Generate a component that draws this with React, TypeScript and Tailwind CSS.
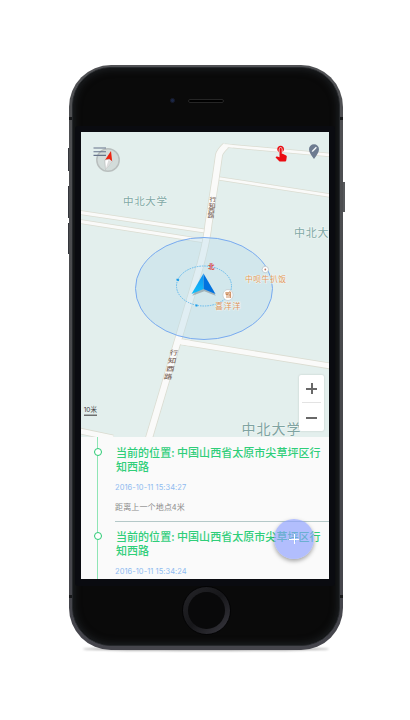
import React from "react";
import { MdTouchApp } from "react-icons/md";

const CJK = "font-['Noto_Sans_CJK_SC',sans-serif]";

function Road({ d, w }: { d: string; w: number }) {
  return (
    <g fill="none" strokeLinejoin="round">
      <path d={d} stroke="#dbdcd1" strokeWidth={w + 1.6} />
      <path d={d} stroke="#fafaf9" strokeWidth={w} />
    </g>
  );
}

type LabelProps = { x: number; y: number; w: number; size: number; fill: string; children: string; weight?: number };

function Label({ x, y, w, size, fill, children, weight = 400 }: LabelProps) {
  return (
    <text
      x={x}
      y={y}
      textLength={w}
      fontSize={size}
      fill={fill}
      fontWeight={weight}
      stroke="#f4faf8"
      strokeWidth="1.2"
      strokeOpacity="0.7"
      paintOrder="stroke"
    >
      {children}
    </text>
  );
}

function MapView() {
  return (
    <svg viewBox="81 132 248 305" className={`block h-[305px] w-[248px] ${CJK}`}>
      <defs>
        <linearGradient id="arrowLeft" x1="0" y1="0" x2="0" y2="1">
          <stop offset="0" stopColor="#0d8ff0" />
          <stop offset="1" stopColor="#12c0fa" />
        </linearGradient>
      </defs>
      <rect x="81" y="132" width="248" height="305" fill="#e3efed" />
      <Road d="M216 178 L330 195.500" w={2.6} />
      <Road d="M80 212.500 L208 231.500" w={3.2} />
      <Road d="M80 221.500 L208 241.500" w={3.2} />
      <Road d="M176 341 L330 366" w={5} />
      <Road d="M224.500 145.500 L330 155" w={2.6} />
      <Road d="M80 431 L113 438" w={5} />
      <Road d="M149 438 L200 266 Q207 240 208.500 224 L216 176 L219 155 Q220 151 226 145.500" w={6.2} />
      <path d="M176 341 L190 343.300" stroke="#fafaf9" strokeWidth="5" />
      <path d="M224.500 145.500 L233 146.300" stroke="#fafaf9" strokeWidth="2.600" />

      <ellipse cx="204" cy="288.500" rx="68.500" ry="51" fill="#b8dcea" fillOpacity="0.4" stroke="#78aaf0" strokeWidth="1" />
      <ellipse cx="204" cy="286" rx="27.500" ry="20" fill="none" stroke="#62b9ed" strokeWidth="1" strokeDasharray="1.500 1" />
      <path d="M176.500 279.300 l2.500 1 M195.500 305.500 h2" stroke="#179be9" strokeWidth="1.800" />

      <Label x={123} y={204.500} w={44} size={10.500} fill="#80a8a5">中北大学</Label>
      <Label x={294} y={237} w={34.500} size={11} fill="#80a8a5">中北大</Label>
      <Label x={241.500} y={433.500} w={59} size={14} fill="#7fa3a1">中北大学</Label>

      <text fontSize="4.7" fill="#806b61" fontWeight="500" textAnchor="middle" transform="translate(211.500 0) scale(1.450 1)">
        <tspan x="0.9" y="201.500">行</tspan>
        <tspan x="0.5" y="206.700">知</tspan>
        <tspan x="0" y="211.900">西</tspan>
        <tspan x="-0.5" y="217.100">路</tspan>
      </text>
      <text fontSize="6.500" fill="#806b61" fontWeight="500" textAnchor="middle" transform="translate(236.500 0) skewX(-10) scale(1.300 1)">
        <tspan x="-0.300" y="355">行</tspan>
        <tspan x="-0.500" y="363">知</tspan>
        <tspan x="-0.900" y="371">西</tspan>
        <tspan x="-1.500" y="379">路</tspan>
      </text>

      <circle cx="265.300" cy="269.500" r="3.200" fill="#fff" stroke="#b7c3c8" strokeWidth="0.800" />
      <circle cx="265.300" cy="269.500" r="0.900" fill="#ba7762" />
      <Label x={245} y={282} w={41} size={7.800} fill="#e49a5d">中呗牛扒饭</Label>
      <ellipse cx="228" cy="295" rx="5.100" ry="5.500" fill="#fff" stroke="#c4cdd0" strokeWidth="0.800" />
      <path d="M226 292 v2.500 h2 v-2.500 M227 292 v6 M229 298 v-6 h1.600 v3 h-1.600 M230.600 295 v3" fill="none" stroke="#c88351" strokeWidth="0.900" />
      <Label x={215} y={309} w={25.500} size={8} fill="#dd945d">喜洋洋</Label>
      <text x="208" y="269" fontSize="6.500" fontWeight="700" fill="#d9433d">北</text>

      <path d="M204 275 L215.500 294.500 L204 290 L192 294.500 Z" fill="#59666f" fillOpacity="0.400" transform="translate(0.300 1.300)" />
      <path d="M203.500 273.500 L215.500 294 L203.500 289 Z" fill="#0072df" />
      <path d="M203.500 273.500 L203.500 289 L191.500 294 Z" fill="url(#arrowLeft)" />

      <text x="83.700" y="412.300" fontSize="6.500" fill="#444" textLength="13.300" className="font-['Inter','Noto_Sans_CJK_SC',sans-serif]">10米</text>
      <path d="M84 415.200 H97" fill="none" stroke="#444" strokeWidth="1.100" />

      <circle cx="108" cy="160" r="11.200" fill="#d3dcda" stroke="#b9bfbe" strokeWidth="1.500" />
      <path d="M111 151 L112.200 161.500 L109.300 159.200 L105 160 Z" fill="#ed2411" />
      <path d="M104.800 160 L109.300 159.200 L112 161.500 L105.500 169.500 Z" fill="#fff" stroke="#a9a9a9" strokeWidth="0.500" />
      <path d="M108.500 160 L112 161.500 L105.500 169.500 Z" fill="#ddd" />
      <path d="M93.500 148 H106 M93.500 151.700 H106 M93.500 155.400 H106" stroke="#66738a" strokeWidth="1.100" />

      <path d="M314 159 C311.500 155.500 309 152.500 309 149.300 A5 5 0 0 1 319 149.300 C319 152.500 316.500 155.500 314 159 Z" fill="#6d7b90" />
      <path d="M311.700 152 l.5 -1.500 3.700 -3.700 1 1 -3.700 3.700 z" fill="#f5f8fa" />
    </svg>
  );
}

function Entry({ time, last }: { time: string; last?: boolean }) {
  return (
    <li className={`flex h-[85px] shrink-0 ${last ? "-mt-px" : ""}`}>
      <div className="w-[34px] shrink-0 pl-[12.5px]">
        <div className="flex h-full w-2 flex-col items-center">
          <span className="h-[11px] w-px bg-[#8fe5b5]" />
          <span className="h-2 w-2 shrink-0 rounded-full border-[1.5px] border-[#28ca72] bg-white" />
          <span className="w-px grow bg-[#8fe5b5]" />
        </div>
      </div>
      <div className={`flex grow flex-col ${last ? "" : "border-b border-[#b4c8c8]"}`}>
        <p className="mt-2 h-[28px] whitespace-nowrap pl-px text-[11px] font-medium leading-[14px] tracking-[0.04px] text-[#2fce79]">
          当前的位置: 中国山西省太原市尖草坪区行
          <br />
          知西路
        </p>
        <p className="mt-[9.5px] font-['Inter',sans-serif] text-[7.5px] leading-[10px] tracking-[0.06px] text-[#8fbaf0]">{time}</p>
        {!last && <p className="mt-[8.5px] whitespace-nowrap text-[8px] leading-[12px] tracking-[0.15px] text-[#8b8b8b]">距离上一个地点4米</p>}
      </div>
    </li>
  );
}

export default function App() {
  return (
    <main className={`h-[720px] w-[410px] overflow-hidden bg-white pl-[69px] pt-[65px] ${CJK}`}>
      <div className="relative h-[585px] w-[274px]">
        <span className="absolute -left-px top-[83px] h-[23px] w-1 bg-[#34363c]" />
        <span className="absolute -left-px top-[121px] h-[32px] w-1 bg-[#34363c]" />
        <span className="absolute -left-px top-[158px] h-[31px] w-1 bg-[#34363c]" />
        <span className="absolute -right-[2px] top-[117px] h-[30px] w-1 bg-[#56585b]" />
        <span className="absolute -bottom-[1px] left-[14px] h-1 w-[246px] rounded-[50%] bg-[#aaa] blur-[1px]" />
        <div className="absolute inset-0 rounded-[42px] bg-linear-to-b from-[#505154] via-[#48494c] to-[#45454c]" />
        <span className="absolute left-0 top-[52px] h-[3px] w-full bg-[#191a1c]" />
        <span className="absolute left-0 top-[530px] h-[3px] w-full bg-[#191a1c]" />
        <div className="absolute inset-x-[3px] bottom-[4px] top-[2px] rounded-[39px] border border-[#25282b] bg-[#0a0a0a] shadow-[inset_0_0_9px_#23272b]" />
        <div className="relative flex h-full flex-col">
          <header className="flex h-[61px] w-full items-center pl-[101px] pt-[10px]">
            <span className="h-[5px] w-[5px] rounded-full border border-[#171a2a] bg-[#1a2747]" />
            <span className="ml-[13px] h-1 w-[36px] rounded-full border border-[#252525] bg-black" />
          </header>
          <section className="ml-[6px] flex h-[460px] w-[260px] flex-col rounded-[3px] bg-[#0a0b10] px-[6px] pb-[7px] pt-[6px]">
            <div className="relative flex h-[447px] w-[248px] flex-col overflow-hidden bg-[#fafafa]">
              <MapView />
              <MdTouchApp className="absolute left-[190.5px] top-[11px] h-[19px] w-[18px] text-[#eb0c12]" />
              <div className="absolute left-[218px] top-[243px] flex h-[56px] w-[25px] flex-col items-center rounded-[2px] bg-white shadow-[0_0_2px_#bbc4c2]">
                <div className="relative h-[27px] w-full">
                  <span className="absolute left-[7px] top-[13px] h-[1.5px] w-[11px] bg-[#686868]" />
                  <span className="absolute left-[12px] top-[8px] h-[11px] w-[1.5px] bg-[#686868]" />
                </div>
                <span className="h-px w-[19px] bg-[#e3e3e3]" />
                <span className="mt-[14px] h-[1.5px] w-[11px] bg-[#686868]" />
              </div>
              <ul className="flex h-[142px] flex-col overflow-hidden">
                <Entry time="2016-10-11 15:34:27" />
                <Entry time="2016-10-11 15:34:24" last />
              </ul>
              <button aria-label="添加" className="absolute left-[193px] top-[387px] flex h-[40px] w-[40px] items-center justify-center rounded-full bg-[#8c9eff]/65 shadow-[0_2px_4px_rgba(0,0,0,0.35)]">
                <span className="absolute h-px w-[10px] bg-white" />
                <span className="absolute h-[10px] w-px bg-white" />
              </button>
            </div>
          </section>
          <footer className="ml-[113px] flex h-[49px] w-[49px] items-center justify-center rounded-full border-[1.5px] border-[#030304] bg-linear-to-br from-[#252529] via-[#17171a] to-[#3b3a42] p-[5px]">
            <span className="h-full w-full rounded-full bg-[#09090a]" />
          </footer>
        </div>
      </div>
    </main>
  );
}
